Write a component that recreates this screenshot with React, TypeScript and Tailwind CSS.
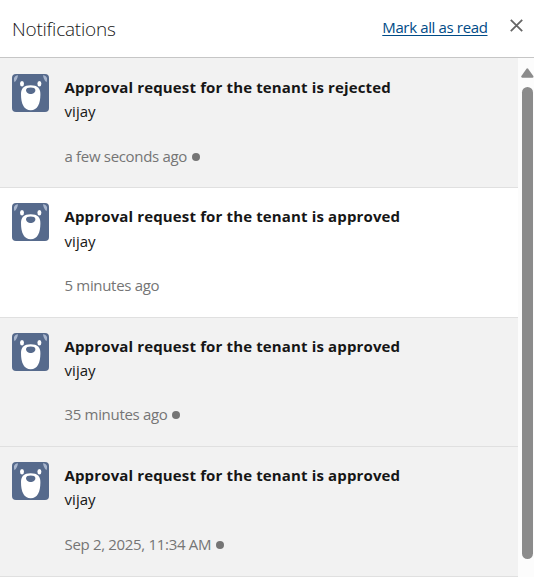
type Notification = {
  title: string;
  author: string;
  time: string;
  unread: boolean;
  row: string;
  authorOffset: string;
  timeOffset: string;
};

const notifications: Notification[] = [
  { title: 'Approval request for the tenant is rejected', author: 'vijay', time: 'a few seconds ago', unread: true, row: 'h-[130px] pt-4', authorOffset: 'mt-0', timeOffset: 'mt-[21px]' },
  { title: 'Approval request for the tenant is approved', author: 'vijay', time: '5 minutes ago', unread: false, row: 'h-[130px] pt-[15px]', authorOffset: 'mt-px', timeOffset: 'mt-5' },
  { title: 'Approval request for the tenant is approved', author: 'vijay', time: '35 minutes ago', unread: true, row: 'h-[129px] pt-[15px]', authorOffset: 'mt-0', timeOffset: 'mt-5' },
  { title: 'Approval request for the tenant is approved', author: 'vijay', time: 'Sep 2, 2025, 11:34 AM', unread: true, row: 'h-[130px] pt-[15px]', authorOffset: 'mt-0', timeOffset: 'mt-[21px]' },
];

function BearAvatar() {
  return (
    <svg className="block h-[38px] w-[37px] shrink-0 rounded-[4px]" viewBox="0 0 37 38" preserveAspectRatio="none">
      <rect width="37" height="38" fill="#566a8c" />
      <path d="M2.6 8.2C1.2 4.8 2 1.6 6 1.3C5.6 3.8 4.6 6.4 2.6 8.2Z" fill="#a9b6cd" />
      <path d="M34.4 8.2C35.8 4.8 35 1.6 31 1.3C31.4 3.8 32.4 6.4 34.4 8.2Z" fill="#a9b6cd" />
      <ellipse cx="10" cy="9.8" rx="2" ry="2.7" fill="white" />
      <ellipse cx="27.4" cy="9.8" rx="2" ry="2.7" fill="white" />
      <path d="M18.7 11.2C25.5 11.2 28.4 14.5 28.4 20C28.4 30 25.5 36.2 18.7 36.2C11.9 36.2 9 30 9 20C9 14.5 11.9 11.2 18.7 11.2Z" fill="white" />
      <path d="M14 16.2C14 14.3 16 13.6 18.7 13.6C21.4 13.6 23.4 14.3 23.4 16.2C23.4 18.5 20.8 20.1 18.7 20.1C16.6 20.1 14 18.5 14 16.2Z" fill="#566a8c" />
    </svg>
  );
}

function NotificationRow({ item }: { item: Notification }) {
  return (
    <article className={`flex gap-[15.5px] border-b border-[#e0e0e0] pl-3 ${item.row} ${item.unread ? 'bg-[#f2f2f2]' : 'bg-white'}`}>
      <BearAvatar />
      <div className="pt-px text-[15px] leading-6 whitespace-nowrap">
        <h2 className="font-bold tracking-[0.14px] text-[#161616]">{item.title}</h2>
        <p className={`tracking-[0.05px] text-[#161616] ${item.authorOffset}`}>{item.author}</p>
        <div className={`flex items-center gap-[5px] text-[#757575] ${item.timeOffset}`}>
          <span className="tracking-[-0.32px]">{item.time}</span>
          {item.unread && <span className="mt-0.5 size-2 rounded-full bg-[#757575]" />}
        </div>
      </div>
    </article>
  );
}

export default function App() {
  return (
    <main className="flex h-[577px] w-[534px] flex-col overflow-hidden bg-white font-['Open_Sans','Noto_Sans',sans-serif]">
      <header className="flex h-[58px] shrink-0 items-start border-b border-[#c6c6c6] pl-3">
        <h1 className="mt-[15px] text-[19px] leading-7 font-light tracking-[-0.22px] text-[#161616]">Notifications</h1>
        <button className="mt-[15px] mr-[22.5px] ml-auto text-[15px] leading-6 tracking-[-0.36px] whitespace-nowrap text-[#004b87] underline underline-offset-2">Mark all as read</button>
        <button aria-label="Close" className="mt-[19px] mr-[11px]">
          <svg className="block size-[13px]" viewBox="0 0 13 13" fill="none" stroke="#666" strokeWidth="1.8">
            <path d="M.8.8L12.2 12.2M12.2.8L.8 12.2" />
          </svg>
        </button>
      </header>
      <div className="flex min-h-0 flex-1">
        <div className="w-[518px]">
          {notifications.map((item, index) => <NotificationRow key={index} item={item} />)}
        </div>
        <div className="flex w-4 flex-col items-end bg-[#fcfcfc] pt-2.5">
          <svg className="block h-[10px] w-[13px]" viewBox="0 0 13 10" fill="#8b8b8b">
            <path d="M5.5.7Q6.3-.3 7.1.7L12.3 8Q13 9.6 11.3 9.7H1.3Q-.4 9.6.4 8Z" />
          </svg>
          <div className="mt-[9px] mr-px h-[472px] w-[11px] rounded-full bg-[#8b8b8b]" />
        </div>
      </div>
    </main>
  );
}
